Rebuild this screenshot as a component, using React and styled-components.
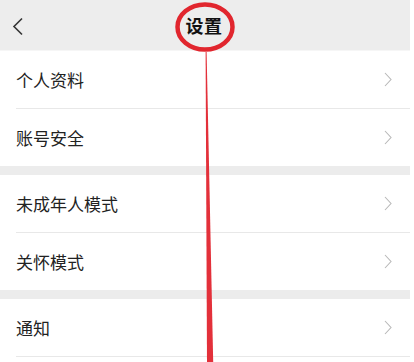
import React from 'react'
import styled, {createGlobalStyle} from 'styled-components'

const Global = createGlobalStyle`
  html, body {
    margin: 0;
    padding: 0;
    background: #fff;
  }
  body {
    font-family: "Noto Sans CJK SC", "Noto Sans", sans-serif;
    color: #222;
  }
`

const Screen = styled.div`
  position: relative;
  width: 410px;
  height: 362px;
  overflow: hidden;
  background: #ececec;
`

const Header = styled.header`
  height: 50px;
  display: flex;
  align-items: center;
  justify-content: center;
  position: relative;
  background: #ededed;
  border-bottom: 1px solid #f6f6f6;
`

const Back = styled.div`
  position: absolute;
  left: 12px;
  top: 17px;
  width: 12px;
  height: 19px;
  display: flex;
`

const Title = styled.h1`
  margin: 0 0 0 -2px;
  font-size: 18px;
  font-weight: 700;
  color: #111;
  letter-spacing: 0.5px;
`

const Group = styled.section`
  background: #fff;
  margin-bottom: ${p => (p.$last ? 0 : 9)}px;
  padding-bottom: ${p => (p.$last ? 5 : 0)}px;
`

const Row = styled.div`
  height: 57px;
  display: flex;
  align-items: center;
  justify-content: space-between;
  padding: 0 18px 0 16px;
  position: relative;

  & + & {
    border-top: 1px solid #e8e8e8;
  }
  & + &::before {
    content: '';
    position: absolute;
    left: 0;
    top: -1px;
    width: 16px;
    height: 1px;
    background: #fff;
  }
`

const Divider = styled.div`
  height: 1px;
  margin-left: 16px;
  background: #e8e8e8;
`

const Label = styled.span`
  font-size: 17px;
  color: #222;
  line-height: 1;
`

const Chevron = styled.svg`
  width: 8px;
  height: 15px;
  display: block;
`

const Annotation = styled.svg`
  position: absolute;
  left: 0;
  top: 0;
  width: 414px;
  height: 362px;
  pointer-events: none;
`

const Arrow = () => (
  <Chevron viewBox="0 0 8 15">
    <path d="M1 1 L7 7.5 L1 14" fill="none" stroke="#b8b8b8" strokeWidth="1.1" />
  </Chevron>
)

const groups = [
  ['个人资料', '账号安全'],
  ['未成年人模式', '关怀模式'],
  ['通知'],
]

const App = () => (
  <>
    <Global />
    <Screen>
      <Header>
        <Back>
          <svg width="12" height="19" viewBox="0 0 12 19">
            <path d="M10 1.5 L2 9.5 L10 17.5" fill="none" stroke="#333" strokeWidth="1.6" />
          </svg>
        </Back>
        <Title>设置</Title>
      </Header>
      {groups.map((g, i) => {
        const last = i === groups.length - 1
        return (
          <Group key={i} $last={last}>
            {g.map(item => (
              <Row key={item}>
                <Label>{item}</Label>
                <Arrow />
              </Row>
            ))}
            {last && <Divider />}
          </Group>
        )
      })}
      <Annotation viewBox="0 0 414 362">
        <ellipse cx="205" cy="27" rx="27.5" ry="22.5" fill="none" stroke="#e1262e" strokeWidth="4.5" />
        <polygon points="205.6,52 206.6,52 213.2,362 207,362" fill="#e3303a" />
      </Annotation>
    </Screen>
  </>
)

export default App
